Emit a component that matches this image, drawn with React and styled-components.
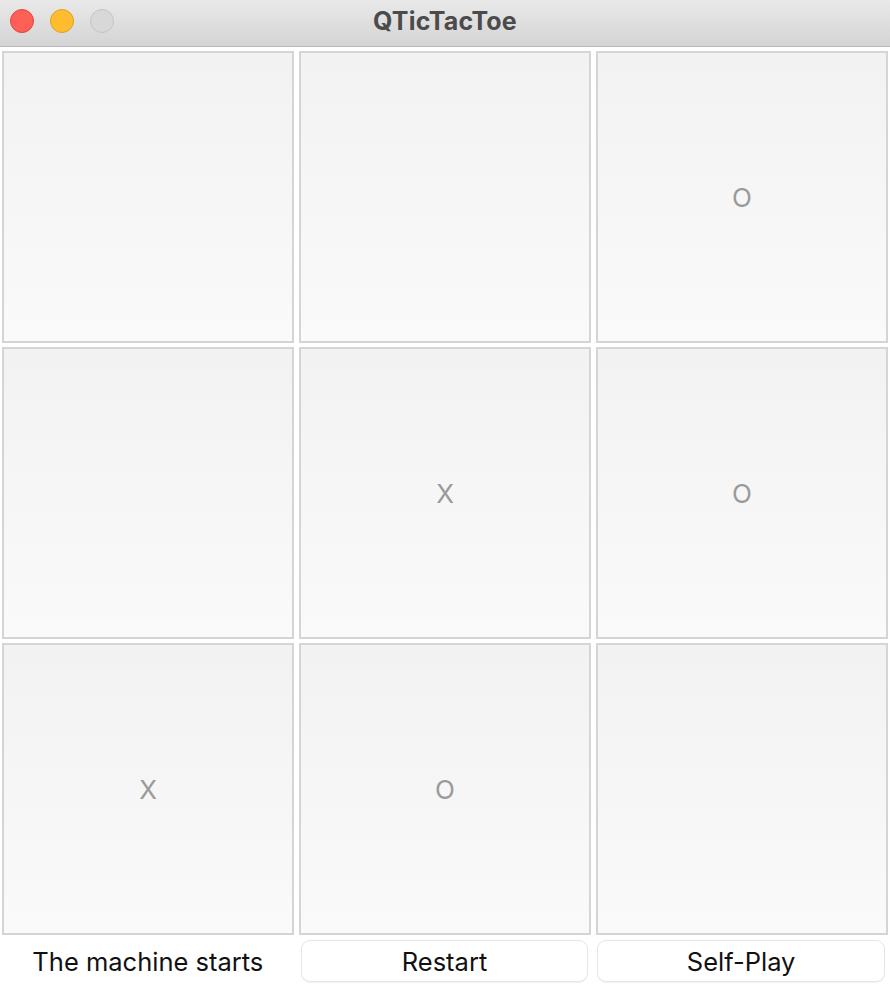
import React from "react";
import styled, { createGlobalStyle } from "styled-components";

const Global = createGlobalStyle`
  html, body { margin: 0; padding: 0; background: #ffffff; }
  body { font-family: Inter, "Noto Sans", "Liberation Sans", sans-serif; }
  * { box-sizing: border-box; }
`;

const Window = styled.div`
  width: 890px;
  height: 994px;
  display: flex;
  flex-direction: column;
  background: #ffffff;
  overflow: hidden;
`;

const TitleBar = styled.div`
  height: 47px;
  flex: none;
  position: relative;
  display: flex;
  align-items: center;
  justify-content: center;
  padding-bottom: 5px;
  background: linear-gradient(#e9e9e9, #d4d4d4);
  border-bottom: 1px solid #b9b9b9;
`;

const Lights = styled.div`
  position: absolute;
  left: 10px;
  top: 9px;
  display: flex;
  gap: 16px;
`;

const Light = styled.span`
  width: 24px;
  height: 24px;
  border-radius: 50%;
  background: ${(p) => p.$bg};
  border: 1px solid ${(p) => p.$bd};
`;

const Title = styled.div`
  font-size: 25px;
  font-weight: 700;
  color: #4b4b4b;
  letter-spacing: 0.2px;
`;

const Board = styled.div`
  display: grid;
  grid-template-columns: repeat(3, 1fr);
  grid-auto-rows: 292px;
  column-gap: 5px;
  row-gap: 4px;
  padding: 4px 2px 0 2px;
`;

const Cell = styled.div`
  display: flex;
  align-items: center;
  justify-content: center;
  border: 2px solid #d5d5d5;
  background: linear-gradient(#f2f2f2, #fafafa);
  color: #9a9a9a;
  font-size: 26px;
  font-family: Inter, "Noto Sans", "Liberation Sans", sans-serif;
`;

const Footer = styled.div`
  display: grid;
  grid-template-columns: repeat(3, 1fr);
  gap: 5px;
  padding: 5px 3px 0 2px;
`;

const Label = styled.div`
  height: 42px;
  display: flex;
  align-items: center;
  justify-content: center;
  font-size: 25.5px;
  color: #111;
`;

const Button = styled.button`
  height: 42px;
  margin: 0 2px 0 2px;
  border: 1px solid #e6e6e6;
  border-radius: 9px;
  background: #ffffff;
  box-shadow: 0 1px 1px rgba(0, 0, 0, 0.06);
  font-family: Inter, "Noto Sans", "Liberation Sans", sans-serif;
  font-size: 25.5px;
  color: #111;
  cursor: pointer;
`;

const cells = ["", "", "O", "", "X", "O", "X", "O", ""];

export default function App() {
  return (
    <Window>
      <Global />
      <TitleBar>
        <Lights>
          <Light $bg="#fe5f57" $bd="#e0443e" />
          <Light $bg="#febc2e" $bd="#dea123" />
          <Light $bg="#d8d8d8" $bd="#c4c4c4" />
        </Lights>
        <Title>QTicTacToe</Title>
      </TitleBar>
      <Board>
        {cells.map((c, i) => (
          <Cell key={i}>{c}</Cell>
        ))}
      </Board>
      <Footer>
        <Label>The machine starts</Label>
        <Button>Restart</Button>
        <Button>Self-Play</Button>
      </Footer>
    </Window>
  );
}
